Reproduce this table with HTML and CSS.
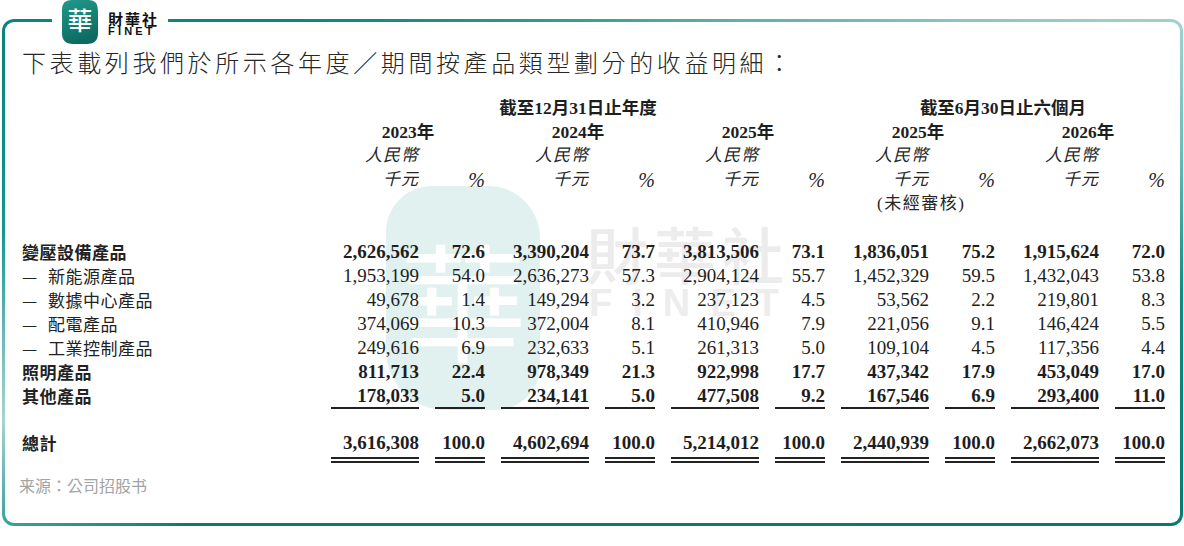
FILE: index.html
```html
<!DOCTYPE html>
<html lang="zh-Hant">
<head>
<meta charset="utf-8">
<link rel="stylesheet" href="styles.css">
</head>
<body>
<div class="frame">
  <div class="inner">
    <div class="watermark" aria-hidden="true">
      <div class="wm-badge"><span>華</span></div>
      <div class="wm-name">財華社</div>
      <div class="wm-finet">FINET</div>
    </div>
    <h1 class="title">下表載列我們於所示各年度／期間按產品類型劃分的收益明細：</h1>
    <div class="grid">
      <div></div>
      <div class="hg span6">截至12月31日止年度</div>
      <div class="hg span4">截至6月30日止六個月</div>

      <div></div>
      <div class="hy span2">2023年</div>
      <div class="hy span2">2024年</div>
      <div class="hy span2">2025年</div>
      <div class="hy span2">2025年</div>
      <div class="hy span2">2026年</div>

      <div></div>
      <div class="hu">人民幣</div><div></div>
      <div class="hu">人民幣</div><div></div>
      <div class="hu">人民幣</div><div></div>
      <div class="hu">人民幣</div><div></div>
      <div class="hu">人民幣</div><div></div>

      <div></div>
      <div class="hu">千元</div><div class="hu pct">%</div>
      <div class="hu">千元</div><div class="hu pct">%</div>
      <div class="hu">千元</div><div class="hu pct">%</div>
      <div class="hu">千元</div><div class="hu pct">%</div>
      <div class="hu">千元</div><div class="hu pct">%</div>

      <div></div>
      <div class="span6"></div>
      <div class="note span2">(未經審核)</div>
      <div class="span2"></div>

      <div class="spacer full"></div>

      <div class="lab b">變壓設備產品</div>
      <div class="n b">2,626,562</div><div class="n b">72.6</div>
      <div class="n b">3,390,204</div><div class="n b">73.7</div>
      <div class="n b">3,813,506</div><div class="n b">73.1</div>
      <div class="n b">1,836,051</div><div class="n b">75.2</div>
      <div class="n b">1,915,624</div><div class="n b">72.0</div>

      <div class="lab"><span class="dash">—</span>新能源產品</div>
      <div class="n">1,953,199</div><div class="n">54.0</div>
      <div class="n">2,636,273</div><div class="n">57.3</div>
      <div class="n">2,904,124</div><div class="n">55.7</div>
      <div class="n">1,452,329</div><div class="n">59.5</div>
      <div class="n">1,432,043</div><div class="n">53.8</div>

      <div class="lab"><span class="dash">—</span>數據中心產品</div>
      <div class="n">49,678</div><div class="n">1.4</div>
      <div class="n">149,294</div><div class="n">3.2</div>
      <div class="n">237,123</div><div class="n">4.5</div>
      <div class="n">53,562</div><div class="n">2.2</div>
      <div class="n">219,801</div><div class="n">8.3</div>

      <div class="lab"><span class="dash">—</span>配電產品</div>
      <div class="n">374,069</div><div class="n">10.3</div>
      <div class="n">372,004</div><div class="n">8.1</div>
      <div class="n">410,946</div><div class="n">7.9</div>
      <div class="n">221,056</div><div class="n">9.1</div>
      <div class="n">146,424</div><div class="n">5.5</div>

      <div class="lab"><span class="dash">—</span>工業控制產品</div>
      <div class="n">249,616</div><div class="n">6.9</div>
      <div class="n">232,633</div><div class="n">5.1</div>
      <div class="n">261,313</div><div class="n">5.0</div>
      <div class="n">109,104</div><div class="n">4.5</div>
      <div class="n">117,356</div><div class="n">4.4</div>

      <div class="lab b">照明產品</div>
      <div class="n b">811,713</div><div class="n b">22.4</div>
      <div class="n b">978,349</div><div class="n b">21.3</div>
      <div class="n b">922,998</div><div class="n b">17.7</div>
      <div class="n b">437,342</div><div class="n b">17.9</div>
      <div class="n b">453,049</div><div class="n b">17.0</div>

      <div class="lab b">其他產品</div>
      <div class="n b ul">178,033</div><div class="n b ul">5.0</div>
      <div class="n b ul">234,141</div><div class="n b ul">5.0</div>
      <div class="n b ul">477,508</div><div class="n b ul">9.2</div>
      <div class="n b ul">167,546</div><div class="n b ul">6.9</div>
      <div class="n b ul">293,400</div><div class="n b ul">11.0</div>

      <div class="spacer2 full"></div>

      <div class="lab b">總計</div>
      <div class="n b dul">3,616,308</div><div class="n b dul">100.0</div>
      <div class="n b dul">4,602,694</div><div class="n b dul">100.0</div>
      <div class="n b dul">5,214,012</div><div class="n b dul">100.0</div>
      <div class="n b dul">2,440,939</div><div class="n b dul">100.0</div>
      <div class="n b dul">2,662,073</div><div class="n b dul">100.0</div>
    </div>
    <p class="source">来源：公司招股书</p>
  </div>
</div>
<div class="logo">
  <svg class="logo-badge" width="36" height="44" viewBox="0 0 36 44">
    <defs>
      <linearGradient id="lg" x1="0" y1="0" x2="0.3" y2="1">
        <stop offset="0" stop-color="#22998b"/>
        <stop offset="1" stop-color="#0d6c62"/>
      </linearGradient>
    </defs>
    <path d="M9 0 H27 Q36 0 36 11 V33 Q36 44 25 44 H11 Q0 44 0 33 V10 Q0 0 9 0 Z" fill="url(#lg)"/>
    <text x="18" y="30" text-anchor="middle" class="logo-char">華</text>
  </svg>
  <div class="logo-text">
    <div class="logo-name">財華社</div>
    <div class="logo-finet">FINET</div>
  </div>
</div>
</body>
</html>
```

FILE: styles.css
```css
html, body {
  margin: 0;
  padding: 0;
  background: #ffffff;
}

body {
  position: relative;
  width: 1184px;
  height: 546px;
  overflow: hidden;
  font-family: "Liberation Serif", "Noto Sans CJK TC", serif;
  color: #1e1e1e;
}

.frame {
  margin: 19px 0 0 2px;
  width: 1181px;
  height: 507px;
  box-sizing: border-box;
  padding: 3px;
  border-radius: 12px;
  background: conic-gradient(from 0deg at 50% 50%,
    #3aa098 0deg,
    #6dbab4 45deg,
    #a3d1cd 67deg,
    #6fbcb5 78deg,
    #13897f 92deg,
    #0a7a70 113deg,
    #0a7b71 180deg,
    #0a7b71 238deg,
    #3aa39b 247deg,
    #a8d4d0 256deg,
    #62b6af 265deg,
    #12998f 274deg,
    #0b857c 290deg,
    #0d877d 311deg,
    #3aa098 360deg);
}

.inner {
  position: relative;
  height: 100%;
  box-sizing: border-box;
  background: #ffffff;
  border-radius: 9px;
  padding: 25px 0 0 17px;
}

.title {
  position: relative;
  z-index: 1;
  margin: 0;
  font-family: "Noto Sans CJK TC", sans-serif;
  font-weight: 300;
  font-size: 24px;
  line-height: 30px;
  letter-spacing: 3.6px;
  color: #262626;
}

.watermark {
  position: absolute;
  left: 0;
  top: 0;
  width: 100%;
  height: 100%;
  z-index: 0;
  pointer-events: none;
}

.wm-badge {
  position: absolute;
  left: 381px;
  top: 164px;
  width: 154px;
  height: 224px;
  border-radius: 46px 52px 44px 60px;
  background: #e1f1ef;
  display: flex;
  align-items: center;
  justify-content: center;
}

.wm-badge span {
  font-family: "Noto Sans CJK TC", sans-serif;
  font-weight: 400;
  font-size: 128px;
  line-height: 1;
  color: #ffffff;
}

.wm-name {
  position: absolute;
  left: 581px;
  top: 200px;
  font-family: "Noto Sans CJK TC", sans-serif;
  font-weight: 500;
  font-size: 62px;
  line-height: 1;
  letter-spacing: 6px;
  color: #ececec;
}

.wm-finet {
  position: absolute;
  left: 584px;
  top: 262px;
  font-family: "Liberation Sans", sans-serif;
  font-weight: 700;
  font-size: 38px;
  line-height: 1;
  letter-spacing: 20px;
  color: #ededed;
}

.grid {
  position: relative;
  z-index: 1;
  margin-top: 19px;
  display: grid;
  grid-template-columns: 293px repeat(5, 88px 50px);
  column-gap: 16px;
  line-height: 24px;
  font-size: 17px;
}

.span2 { grid-column: span 2; }
.span4 { grid-column: span 4; }
.span6 { grid-column: span 6; }
.full { grid-column: 1 / -1; }

.hg, .hy {
  text-align: center;
  font-weight: 700;
  font-size: 17.5px;
  white-space: nowrap;
}

.hu {
  text-align: right;
  font-style: italic;
  font-size: 17px;
  letter-spacing: 1px;
  white-space: nowrap;
  color: #262626;
}

.hu.pct {
  font-size: 20px;
  letter-spacing: 0;
}

.note {
  padding-left: 36px;
  font-size: 17px;
  letter-spacing: 1.5px;
  white-space: nowrap;
  color: #262626;
}

.spacer { height: 24px; }
.spacer2 { height: 22px; }

.lab {
  font-family: "Noto Sans CJK TC", sans-serif;
  font-size: 17px;
  letter-spacing: 0.5px;
  white-space: nowrap;
  color: #222;
}

.lab.b { font-weight: 700; }

.dash {
  display: inline-block;
  width: 26px;
}

.n {
  text-align: right;
  font-size: 19px;
  white-space: nowrap;
}

.b { font-weight: 700; }

.ul {
  height: 25px;
  box-sizing: border-box;
  border-bottom: 2px solid #222;
}

.dul {
  padding-bottom: 2px;
  border-bottom: 6px double #222;
}

.source {
  margin: 12px 0 0 -3px;
  font-family: "Noto Sans CJK SC", sans-serif;
  font-size: 16px;
  line-height: 20px;
  color: #a3a3a3;
}

.logo {
  position: absolute;
  left: 52px;
  top: 0;
  width: 116px;
  height: 44px;
  background: #ffffff;
  display: flex;
  align-items: flex-start;
}

.logo-badge {
  margin-left: 10px;
  display: block;
}

.logo-char {
  font-family: "Noto Sans CJK TC", sans-serif;
  font-weight: 500;
  font-size: 25px;
  fill: #ffffff;
}

.logo-text {
  margin: 11px 0 0 10px;
  display: flex;
  flex-direction: column;
}

.logo-name {
  font-family: "Noto Sans CJK TC", sans-serif;
  font-weight: 700;
  font-size: 15px;
  line-height: 15px;
  letter-spacing: 2px;
  color: #111;
}

.logo-finet {
  font-family: "Liberation Sans", sans-serif;
  font-weight: 700;
  font-size: 11px;
  line-height: 10px;
  letter-spacing: 3.2px;
  color: #111;
}
```
